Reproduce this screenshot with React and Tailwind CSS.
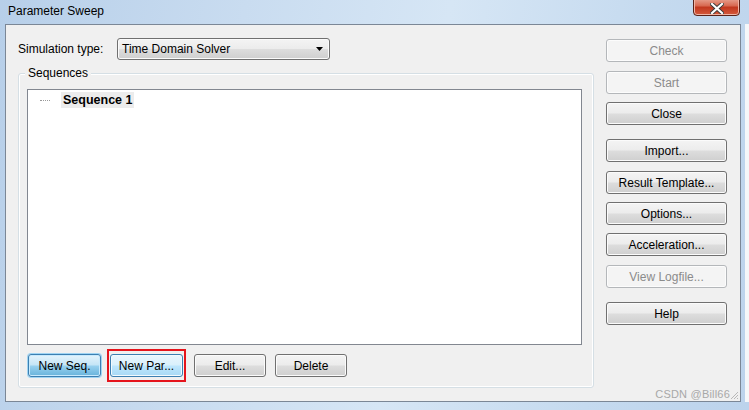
import React from "react";

const F = { fontFamily: '"Liberation Sans", Arial, sans-serif' };

function Btn({ children, w = "w-[121px]", kind = "normal", className = "" }) {
  const base =
    "h-[23px] rounded-[3px] border flex items-center justify-center text-[12px] leading-none shrink-0 ";
  const kinds = {
    normal:
      "border-[#707070] text-black bg-[linear-gradient(to_bottom,#f4f4f4_0%,#ececec_48%,#dddddd_52%,#cfcfcf_100%)] shadow-[inset_0_0_0_1px_#fbfbfb]",
    disabled:
      "border-[#b4b7ba] text-[#8b8b8b] bg-[#f4f4f4] shadow-[inset_0_0_0_1px_#fcfcfc]",
    blue:
      "border-[#3c7fb1] text-black bg-[linear-gradient(to_bottom,#eaf6fd_0%,#d9f0fc_48%,#bee6fd_52%,#a7d9f5_100%)] shadow-[inset_0_0_0_1px_#f2fafe]",
    def:
      "border-[#3c7fb1] text-black bg-[linear-gradient(to_bottom,#e5f4fc_0%,#c4e5f6_48%,#98d1ef_52%,#68b3db_100%)] shadow-[inset_0_0_0_1px_#c8eafd,0_0_0_1px_#9fd4f3]",
  };
  return <div className={base + kinds[kind] + " " + w + " " + className}>{children}</div>;
}

export default function App() {
  return (
    <div
      style={F}
      className="w-[749px] h-[410px] overflow-hidden relative flex flex-col bg-[linear-gradient(100deg,#b7cfe9_0%,#c9dcf0_30%,#d6e6f5_55%,#c5daef_80%,#bcd3ec_100%)]"
    >
      {/* title bar */}
      <div className="h-[24px] flex items-start pl-[8px] pt-[3px] text-[12px] text-black leading-[16px] shrink-0">
        Parameter Sweep
      </div>
      <div className="absolute left-[693px] top-[-3px] w-[47px] h-[19px] rounded-b-[4px] border border-[#5a2218] bg-[linear-gradient(to_bottom,#e9a897_0%,#d86a52_45%,#c2381f_55%,#d45a3c_100%)] shadow-[inset_0_0_0_1px_#f0b5a6] flex items-center justify-center">
        <svg width="14" height="11" viewBox="0 0 14 11" className="mt-[3px]">
          <path
            d="M2 1 L12 10 M12 1 L2 10"
            stroke="#3a3a3a"
            strokeWidth="4"
            strokeLinecap="square"
          />
          <path
            d="M2 1 L12 10 M12 1 L2 10"
            stroke="#ffffff"
            strokeWidth="2.2"
            strokeLinecap="square"
          />
        </svg>
      </div>

      {/* body row */}
      <div className="flex h-[378px] shrink-0">
        <div className="ml-[5px] w-[736px] h-[378px] border border-[#7b8796] bg-[#f0f0f0] flex relative">
          {/* left column */}
          <div className="pl-[12px] pt-[13px] flex flex-col">
            <div className="flex items-center h-[22px]">
              <div className="w-[99px] text-[12px] text-black">Simulation type:</div>
              <div className="w-[213px] h-[22px] rounded-[3px] border border-[#707070] bg-[linear-gradient(to_bottom,#f4f4f4_0%,#ececec_48%,#dddddd_52%,#cfcfcf_100%)] shadow-[inset_0_0_0_1px_#fbfbfb] flex items-center pl-[4px] pr-[6px] text-[12px] text-black">
                <span className="flex-1">Time Domain Solver</span>
                <svg width="7" height="4" viewBox="0 0 7 4">
                  <path d="M0 0 L7 0 L3.5 4 Z" fill="#000" />
                </svg>
              </div>
            </div>

            {/* group box */}
            <div className="mt-[13px] w-[576px] h-[315px] rounded-[3px] border border-[#d5dfe5] shadow-[inset_0_0_0_1px_#ffffff] relative flex flex-col pl-[8px] pt-[15px]">
              <span className="absolute left-[6px] top-[-9px] px-[3px] bg-[#f0f0f0] text-[12px] leading-[16px] text-black">
                Sequences
              </span>
              <div className="w-[555px] h-[256px] border border-[#828790] bg-white relative">
                <div className="flex items-center h-[16px] mt-[2px]">
                  <span className="ml-[12px] w-[10px] border-t border-dotted border-[#9a9a9a] mt-[1px]"></span>
                  <span className="ml-[11px] px-[2px] bg-[#ececec] text-[12.5px] font-bold text-black leading-[16px]">
                    Sequence 1
                  </span>
                </div>
              </div>
              <div className="flex items-center mt-[9px]">
                <Btn w="w-[73px]" kind="def" className="ml-[1px]">New Seq.</Btn>
                <div className="relative ml-[9px]">
                  <Btn w="w-[73px]" kind="blue">New Par...</Btn>
                  <span className="absolute left-[-3px] right-[-3px] top-[-5px] bottom-[-5px] border-2 border-[#e5141c]"></span>
                </div>
                <Btn w="w-[72px]" className="ml-[11px]">Edit...</Btn>
                <Btn w="w-[72px]" className="ml-[9px]">Delete</Btn>
              </div>
            </div>
          </div>

          {/* right column */}
          <div className="ml-[12px] pt-[14px] flex flex-col">
            <Btn kind="disabled">Check</Btn>
            <Btn kind="disabled" className="mt-[9px]">Start</Btn>
            <Btn className="mt-[8px]">Close</Btn>
            <Btn className="mt-[14px]">Import...</Btn>
            <Btn className="mt-[9px]">Result Template...</Btn>
            <Btn className="mt-[8px]">Options...</Btn>
            <Btn className="mt-[8px]">Acceleration...</Btn>
            <Btn kind="disabled" className="mt-[9px]">View Logfile...</Btn>
            <Btn className="mt-[14px]">Help</Btn>
          </div>

          {/* watermark */}
          <span className="absolute right-[10px] bottom-[0px] text-[11px] leading-[14px] text-[#a8a8a8] tracking-[0.2px]">
            CSDN @Bill66
          </span>
          <svg className="absolute right-[1px] bottom-[1px]" width="10" height="10" viewBox="0 0 10 10">
            <path d="M9 2 L2 9 M9 5 L5 9 M9 8 L8 9" stroke="#b8b8b8" strokeWidth="1" />
          </svg>
        </div>
        <div className="w-[4px]"></div>
        <div className="flex-1 bg-[#f5f7f9]"></div>
      </div>
    </div>
  );
}
